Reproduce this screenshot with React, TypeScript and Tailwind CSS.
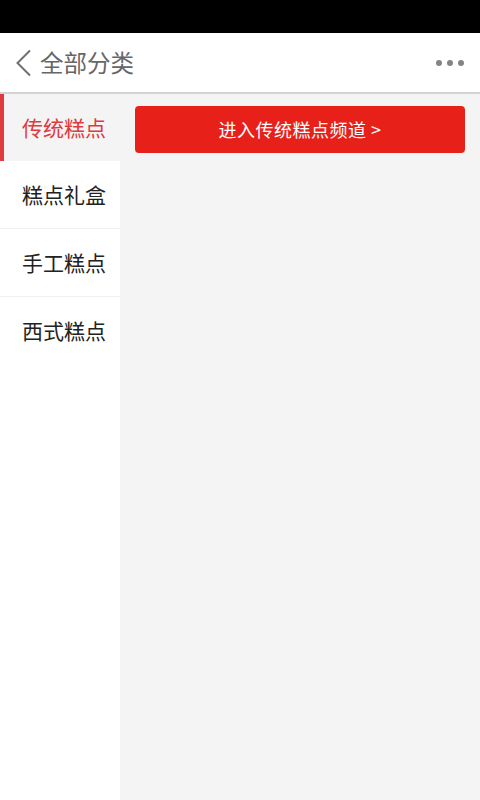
import React from 'react'

const categories = ['传统糕点', '糕点礼盒', '手工糕点', '西式糕点']

export default function App() {
  const active = 0

  return (
    <div className="flex h-[800px] w-[480px] flex-col overflow-hidden bg-white font-['Noto_Sans_CJK_SC',sans-serif]">
      {/* status bar */}
      <div className="h-[33px] shrink-0 bg-black" />

      {/* header */}
      <div className="flex h-[61px] shrink-0 items-center border-b-2 border-[#d4d4d4] bg-white pr-[16px] pl-[15px]">
        <svg width="17" height="28" viewBox="0 0 17 28" className="shrink-0">
          <path d="M15 1.5 L2.5 14 L15 26.5" fill="none" stroke="#707070" strokeWidth="2" />
        </svg>
        <span className="ml-[8px] text-[23.5px] leading-none text-[#666]">全部分类</span>
        <div className="ml-auto flex items-center gap-[5px]">
          <span className="h-[6px] w-[6px] rounded-full bg-[#848484]" />
          <span className="h-[6px] w-[6px] rounded-full bg-[#848484]" />
          <span className="h-[6px] w-[6px] rounded-full bg-[#848484]" />
        </div>
      </div>

      <div className="flex flex-1">
        {/* sidebar */}
        <div className="w-[120px] shrink-0 bg-white">
          {categories.map((c, i) =>
            i === active ? (
              <div
                key={c}
                className="flex h-[67px] items-center border-l-4 border-[#e03a3e] bg-[#f4f4f4] pl-[18px] text-[21px] text-[#e03a3e]"
              >
                {c}
              </div>
            ) : (
              <div
                key={c}
                className={`flex h-[68px] items-center pl-[22px] text-[21px] text-[#222] ${
                  i < categories.length - 1 ? 'border-b border-[#f1f1f1]' : ''
                }`}
              >
                {c}
              </div>
            )
          )}
        </div>

        {/* content */}
        <div className="flex-1 bg-[#f4f4f4] pt-[12px] pr-[15px] pl-[15px]">
          <button className="flex h-[47px] w-full items-center justify-center rounded-[4px] bg-[#e8201a] text-[18px] tracking-[0.5px] text-white">
            进入传统糕点频道 &gt;
          </button>
        </div>
      </div>
    </div>
  )
}
